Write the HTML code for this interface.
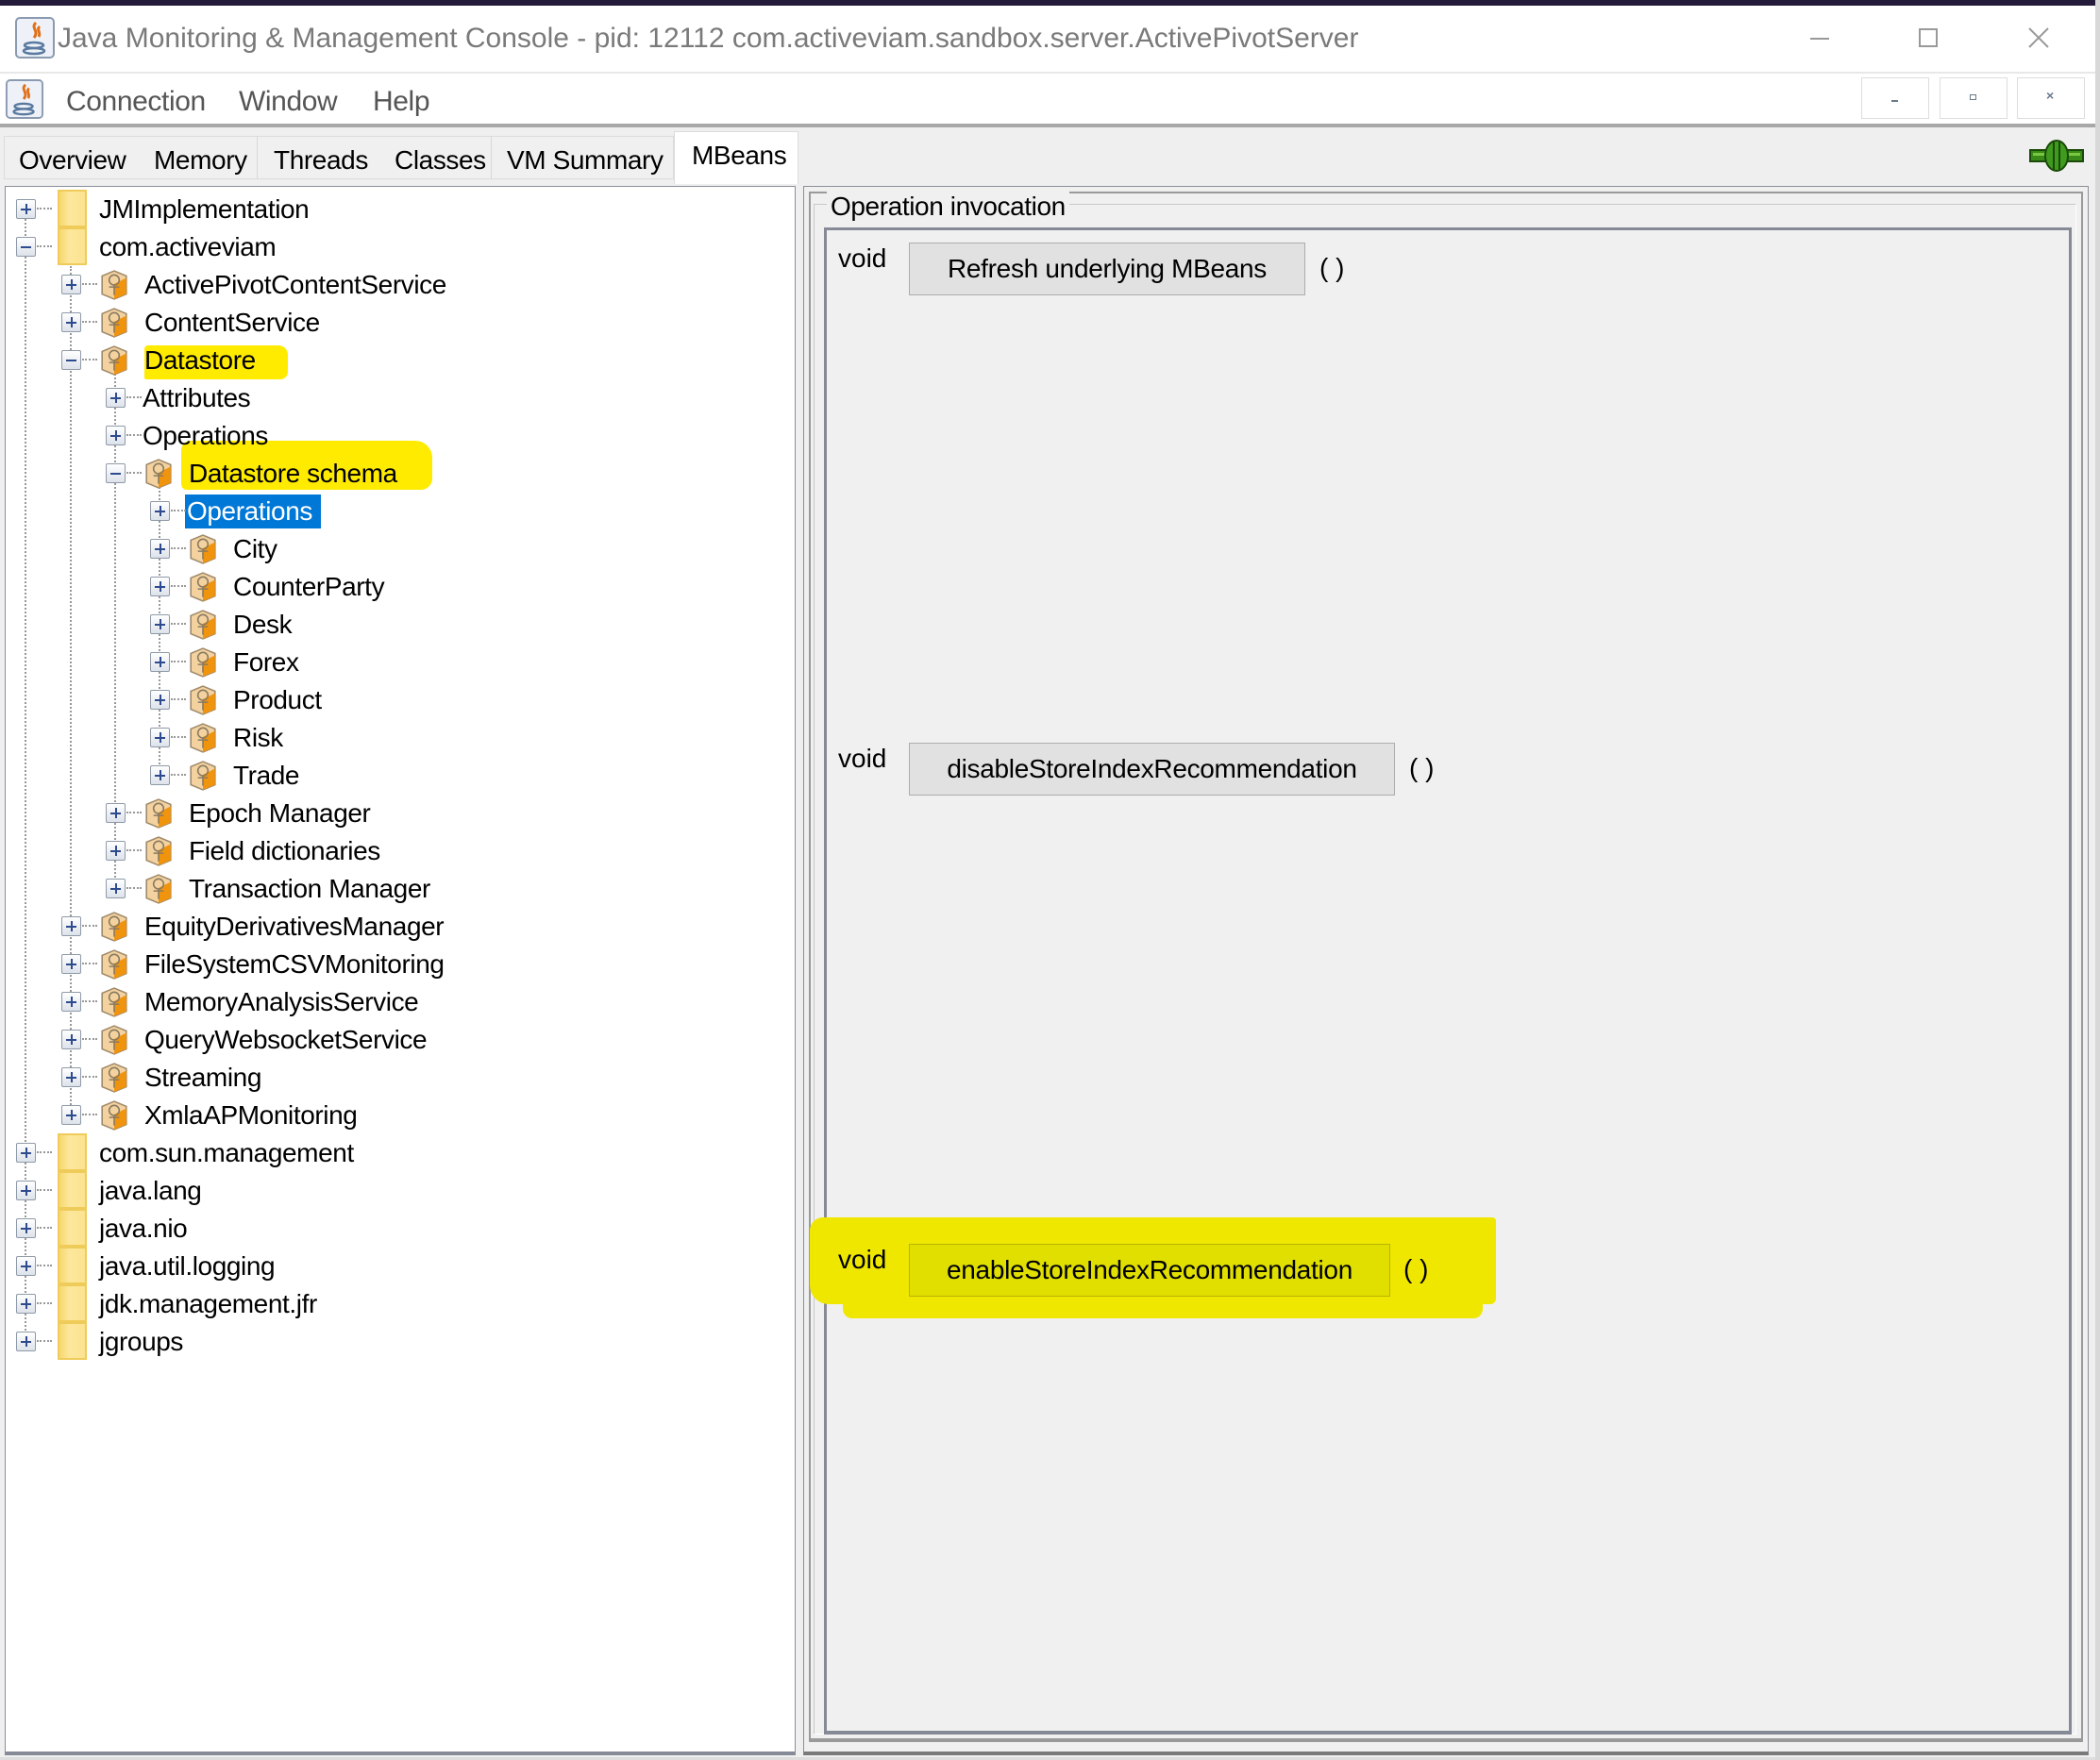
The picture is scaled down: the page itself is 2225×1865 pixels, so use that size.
<!DOCTYPE html>
<html><head><meta charset="utf-8"><style>
*{margin:0;padding:0;box-sizing:border-box}
body{width:2225px;height:1865px;overflow:hidden;background:#fff;font-family:"Liberation Sans","DejaVu Sans",sans-serif;position:relative}
.a{position:absolute}
.t{font-size:28px;letter-spacing:-0.4px;color:#000;white-space:nowrap}
.row{position:absolute;height:40px;width:600px}
.ex{position:absolute;left:0;top:10px;width:21px;height:21px;border:1px solid #8f9aa8;border-radius:2px;background:linear-gradient(#fff,#dde2ea)}
.ex:before{content:"";position:absolute;left:4px;top:9px;width:11px;height:2px;background:#2d4b8e}
.ex.p:after{content:"";position:absolute;left:9px;top:4px;width:2px;height:11px;background:#2d4b8e}
.hd{position:absolute;left:22px;top:19px;width:16px;border-top:2px dotted #999}
.fo{position:absolute;left:44px;top:0;width:31px;height:40px;background:linear-gradient(90deg,#f6d870,#fde79c 40%,#fbe390);border:2px solid #efcc5a}
.be{position:absolute;left:40px;top:5px;width:32px;height:32px}
.lb{position:absolute;top:1px;line-height:40px}
.vl{position:absolute;border-left:2px dotted #999;width:0}
.btn{position:absolute;height:56px;background:#e1e1e1;border:1px solid #adadad;font-size:28px;letter-spacing:-0.3px;line-height:54px;text-align:center;color:#000}
.lab{position:absolute;font-size:28px;color:#000}
</style></head><body>
<div class="a" style="left:0;top:0;width:2225px;height:6px;background:#241b3a"></div>
<div class="a" style="left:2220px;top:0;width:5px;height:1865px;background:#d8d8d8"></div>
<div class="a" style="left:0;top:6px;width:2220px;height:70px;background:#fff"></div>
<svg class="a" style="left:16px;top:18px" width="42" height="44" viewBox="0 0 42 44"><rect x="1" y="1" width="40" height="42" rx="4" fill="#eef2f8" stroke="#8a9ab0" stroke-width="2"/><path d="M22 6c-6 6 4 8-2 16M26 10c-4 4 2 6-1 11" stroke="#e0701a" stroke-width="3" fill="none"/><ellipse cx="20" cy="30" rx="10" ry="3" fill="none" stroke="#5a7aa0" stroke-width="2.5"/><ellipse cx="20" cy="36" rx="11" ry="3" fill="none" stroke="#5a7aa0" stroke-width="2.5"/></svg>
<div class="a t" style="left:61px;top:24px;font-size:30px;letter-spacing:0px;color:#7a7a7a">Java Monitoring &amp; Management Console - pid: 12112 com.activeviam.sandbox.server.ActivePivotServer</div>
<div class="a" style="left:1918px;top:40px;width:20px;height:2px;background:#999"></div>
<div class="a" style="left:2033px;top:30px;width:20px;height:20px;border:2px solid #999"></div>
<svg class="a" style="left:2149px;top:29px" width="22" height="22"><path d="M1 1L21 21M21 1L1 21" stroke="#999" stroke-width="2"/></svg>
<div class="a" style="left:0;top:76px;width:2220px;height:2px;background:#e8e8e8"></div>
<svg class="a" style="left:6px;top:84px" width="40" height="42" viewBox="0 0 42 44"><rect x="1" y="1" width="40" height="42" rx="4" fill="#eef2f8" stroke="#8a9ab0" stroke-width="2"/><path d="M22 6c-6 6 4 8-2 16M26 10c-4 4 2 6-1 11" stroke="#e0701a" stroke-width="3" fill="none"/><ellipse cx="20" cy="30" rx="10" ry="3" fill="none" stroke="#5a7aa0" stroke-width="2.5"/><ellipse cx="20" cy="36" rx="11" ry="3" fill="none" stroke="#5a7aa0" stroke-width="2.5"/></svg>
<div class="a t" style="left:70px;top:91px;font-size:30px;color:#555">Connection</div>
<div class="a t" style="left:253px;top:91px;font-size:30px;color:#555">Window</div>
<div class="a t" style="left:395px;top:91px;font-size:30px;color:#555">Help</div>
<div class="a" style="left:1972px;top:82px;width:72px;height:44px;border:1px solid #ddd"></div>
<div class="a" style="left:2004px;top:106px;width:7px;height:2px;background:#6a7a8a"></div>
<div class="a" style="left:2055px;top:82px;width:72px;height:44px;border:1px solid #ddd"></div>
<div class="a" style="left:2087px;top:100px;width:7px;height:6px;border:1px solid #6a7a8a"></div>
<div class="a" style="left:2137px;top:82px;width:72px;height:44px;border:1px solid #ddd"></div>
<div class="a" style="left:2168px;top:93px;font-size:14px;font-weight:bold;color:#6a7a8a">×</div>
<div class="a" style="left:0;top:131px;width:2220px;height:4px;background:#a8a8a8"></div>
<div class="a" style="left:0;top:135px;width:2220px;height:1730px;background:#efefef"></div>
<div class="a" style="left:4px;top:144px;width:710px;height:46px;border:1px solid #dcdcdc;background:#f0f0f0"></div>
<div class="a" style="left:272px;top:144px;width:1px;height:46px;background:#d8d8d8"></div>
<div class="a" style="left:520px;top:144px;width:1px;height:46px;background:#d8d8d8"></div>
<div class="a" style="left:714px;top:139px;width:132px;height:56px;background:#fff;border:1px solid #dcdcdc;border-bottom:none"></div>
<div class="a t" style="left:20px;top:154px">Overview</div>
<div class="a t" style="left:163px;top:154px">Memory</div>
<div class="a t" style="left:290px;top:154px">Threads</div>
<div class="a t" style="left:418px;top:154px">Classes</div>
<div class="a t" style="left:537px;top:154px">VM Summary</div>
<div class="a t" style="left:733px;top:149px">MBeans</div>
<svg class="a" style="left:2150px;top:148px" width="58" height="34" viewBox="0 0 58 34"><rect x="1" y="11" width="56" height="12" fill="#3a8a1a" stroke="#1a4a08" stroke-width="2"/><rect x="4" y="14" width="50" height="3" fill="#7ac840"/><ellipse cx="29" cy="17" rx="12" ry="16" fill="#3f9a1e" stroke="#1a4a08" stroke-width="2"/><path d="M26 2v30M32 2v30" stroke="#1a4a08" stroke-width="2"/></svg>
<div class="a" style="left:5px;top:197px;width:838px;height:1663px;background:#fff;border:1px solid #8a8f98;border-bottom:4px solid #858a96"></div>
<div class="a" style="left:0;top:1862px;width:2220px;height:3px;background:#ddd"></div>
<div class="a" style="left:153px;top:366px;width:152px;height:36px;background:#ffeb00;border-radius:4px 10px 8px 2px"></div>
<div class="a" style="left:192px;top:467px;width:266px;height:52px;background:#ffeb00;border-radius:10px 18px 12px 6px"></div>
<div class="a" style="left:196px;top:524px;width:144px;height:36px;background:#0078d7"></div>
<div class="vl" style="left:26px;top:232px;height:1190px"></div>
<div class="vl" style="left:74px;top:282px;height:900px"></div>
<div class="vl" style="left:121px;top:392px;height:550px"></div>
<div class="vl" style="left:168px;top:512px;height:310px"></div>
<svg width="0" height="0" style="position:absolute"><defs><g id="bean"><path d="M15 1L27 6V24L15 29L3 24V6Z" fill="#f3d2a0" stroke="#a08a6a" stroke-width="1.5"/><path d="M15 14L27 8V24L15 29Z" fill="#f0940e"/><circle cx="15" cy="10" r="5" fill="none" stroke="#8a7a60" stroke-width="1.5"/><path d="M10 17h10M15 15v10" stroke="#8a7a60" stroke-width="1.5"/></g></defs></svg>
<div id="tree"></div>
<script>
var R=[["JMImplementation",0,"f","p"],["com.activeviam",0,"f","m"],["ActivePivotContentService",1,"b","p"],["ContentService",1,"b","p"],["Datastore",1,"b","m"],["Attributes",2,"n","p"],["Operations",2,"n","p"],["Datastore schema",2,"b","m"],["Operations",3,"n","p","sel"],["City",3,"b","p"],["CounterParty",3,"b","p"],["Desk",3,"b","p"],["Forex",3,"b","p"],["Product",3,"b","p"],["Risk",3,"b","p"],["Trade",3,"b","p"],["Epoch Manager",2,"b","p"],["Field dictionaries",2,"b","p"],["Transaction Manager",2,"b","p"],["EquityDerivativesManager",1,"b","p"],["FileSystemCSVMonitoring",1,"b","p"],["MemoryAnalysisService",1,"b","p"],["QueryWebsocketService",1,"b","p"],["Streaming",1,"b","p"],["XmlaAPMonitoring",1,"b","p"],["com.sun.management",0,"f","p"],["java.lang",0,"f","p"],["java.nio",0,"f","p"],["java.util.logging",0,"f","p"],["jdk.management.jfr",0,"f","p"],["jgroups",0,"f","p"]];
var h="";
R.forEach(function(r,i){var cx=[27,75,122,169][r[1]];var c=221+40*i;
h+='<div class="row" style="left:'+(cx-10)+'px;top:'+(c-20)+'px"><div class="ex '+(r[3]=="p"?"p":"")+'"></div><div class="hd"></div>';
var tl=39;
if(r[2]=="f"){h+='<div class="fo"></div>';tl=88;}
if(r[2]=="b"){h+='<svg class="be" viewBox="0 0 30 30"><use href="#bean"/></svg>';tl=88;}
h+='<div class="lb t" style="left:'+tl+'px;color:'+(r[4]?"#fff":"#000")+'">'+r[0]+'</div></div>';});
document.getElementById("tree").innerHTML=h;
</script>
<div class="a" style="left:851px;top:197px;width:1362px;height:1663px;border:1px solid #8a8f98;border-bottom:4px solid #7a7a7a;background:#f0f0f0"></div>
<div class="a" style="left:857px;top:203px;width:1350px;height:1643px;border:2px solid #9a9a9a;border-bottom:4px solid #9a9a9a"></div>
<div class="a" style="left:862px;top:216px;width:1338px;height:1622px;border:1px solid #c8c8c8;border-right-color:#fff;border-bottom-color:#fff"></div>
<div class="a t" style="left:876px;top:203px;background:#f0f0f0;padding:0 4px">Operation invocation</div>
<div class="a" style="left:873px;top:241px;width:1322px;height:1597px;border:3px solid #868a96;border-bottom-width:4px"></div>
<div class="a" style="left:858px;top:1290px;width:727px;height:92px;background:#f0e700;border-radius:14px 4px 6px 20px"></div>
<div class="a" style="left:893px;top:1300px;width:678px;height:97px;background:#f0e700;border-radius:4px 4px 10px 10px"></div>
<div class="lab" style="left:888px;top:258px">void</div>
<div class="btn" style="left:963px;top:257px;width:420px">Refresh underlying MBeans</div>
<div class="lab" style="left:1398px;top:268px">( )</div>
<div class="lab" style="left:888px;top:788px">void</div>
<div class="btn" style="left:963px;top:787px;width:515px">disableStoreIndexRecommendation</div>
<div class="lab" style="left:1493px;top:798px">( )</div>
<div class="lab" style="left:888px;top:1319px">void</div>
<div class="btn" style="left:963px;top:1318px;width:510px;background:#e0df00;border-color:#b8b400">enableStoreIndexRecommendation</div>
<div class="lab" style="left:1487px;top:1329px">( )</div>
</body></html>
